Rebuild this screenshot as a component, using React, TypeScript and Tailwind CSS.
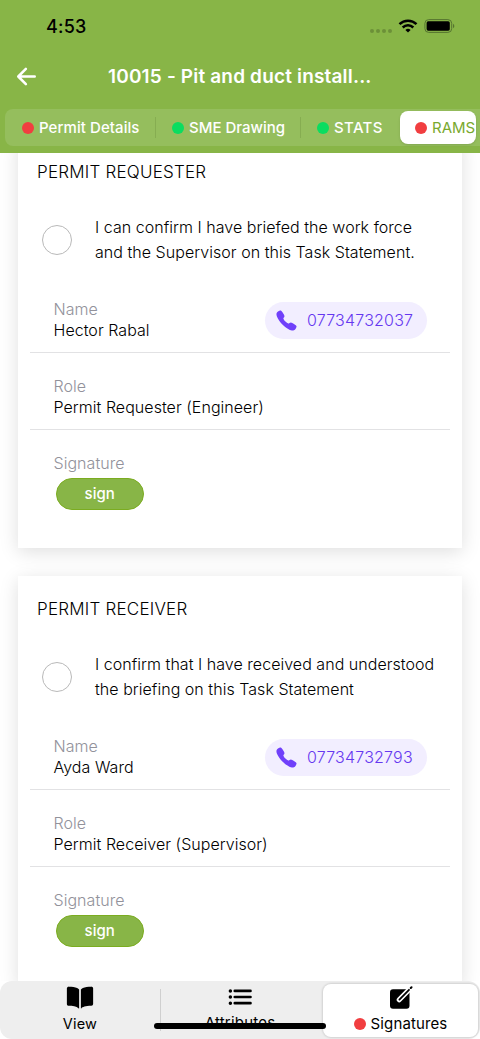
import React from 'react';
import { IoArrowBack, IoBook, IoCall, IoList } from 'react-icons/io5';

interface Person {
  title: string;
  statement: string[];
  name: string;
  phone: string;
  role: string;
}

const PEOPLE: Person[] = [
  {
    title: 'PERMIT REQUESTER',
    statement: ['I can confirm I have briefed the work force', 'and the Supervisor on this Task Statement.'],
    name: 'Hector Rabal',
    phone: '07734732037',
    role: 'Permit Requester (Engineer)',
  },
  {
    title: 'PERMIT RECEIVER',
    statement: ['I confirm that I have received and understood', 'the briefing on this Task Statement'],
    name: 'Ayda Ward',
    phone: '07734732793',
    role: 'Permit Receiver (Supervisor)',
  },
];

const StatusBar: React.FC = () => (
  <div className="flex h-[52px] items-center justify-between pl-[46px] pr-[25px] text-black">
    <span className="text-[18px] font-medium tracking-[0.2px]">4:53</span>
    <div className="flex items-center">
      <div className="mt-[9px] flex gap-[2px]">
        {[0, 1, 2, 3].map((dot) => (
          <span key={dot} className="h-1 w-1 rounded-full bg-[#6c9038]"></span>
        ))}
      </div>
      <svg className="ml-[6px]" width="20" height="14" viewBox="0 0 20 14" fill="none" stroke="black" strokeWidth="2.5">
        <path d="M1.5 5.1a12.2 12.2 0 0 1 17 0" />
        <path d="M4.7 8.5a7.6 7.6 0 0 1 10.6 0" />
        <path d="M10 13.6 7.4 11a3.8 3.8 0 0 1 5.2 0Z" fill="black" stroke="none" />
      </svg>
      <svg className="ml-[6px]" width="31" height="14" viewBox="0 0 31 14">
        <rect x="0.9" y="0.6" width="26.8" height="12.8" rx="3.8" fill="none" stroke="#557430" strokeWidth="1" />
        <rect x="2.6" y="2.3" width="23.2" height="9.4" rx="1.6" />
        <path d="M29 4.8c1.8.8 1.8 3.6 0 4.4Z" fill="#557430" />
      </svg>
    </div>
  </div>
);

const Dot: React.FC<{ color: string }> = ({ color }) => (
  <span className={`h-3 w-3 shrink-0 rounded-full ${color}`}></span>
);

const SignIcon: React.FC = () => (
  <svg width="24" height="24" viewBox="0 0 24 24" fill="none" strokeLinecap="round">
    <rect x="1" y="3.2" width="19.5" height="19.5" rx="3" fill="black" />
    <path d="M10.2 13.8 20.5 3.2" stroke="white" strokeWidth="5" />
    <path d="m10.4 13.6 9.6-9.8" stroke="black" strokeWidth="1.8" />
    <path d="m21.8 2 .7-.7" stroke="black" strokeWidth="2" />
  </svg>
);

const Header: React.FC = () => (
  <header className="relative z-10 h-[153px] overflow-hidden bg-[#88b547] text-white">
    <StatusBar />
    <div className="flex h-[49px] items-center pl-[13px]">
      <IoArrowBack size={27} />
      <h1 className="ml-[68px] mt-[2px] text-[19px] font-semibold tracking-[0.17px] whitespace-nowrap">10015 - Pit and duct install...</h1>
    </div>
    <nav className="ml-[5px] mt-2 flex h-[37px] items-center rounded-l-lg bg-[#95be5d] text-[15px] font-medium leading-[23px] whitespace-nowrap">
      <div className="flex w-[150px] items-center gap-[5px] pl-[17px] tracking-[0.07px]"><Dot color="bg-[#f13e40]" />Permit Details</div>
      <div className="h-[21px] w-px bg-[#86ad51]"></div>
      <div className="flex w-[144px] items-center gap-[5px] pl-4"><Dot color="bg-[#0bdd60]" />SME Drawing</div>
      <div className="h-[21px] w-px bg-[#86ad51]"></div>
      <div className="flex w-[99px] items-center gap-[5px] pl-4 tracking-[0.35px]"><Dot color="bg-[#0bdd60]" />STATS</div>
      <div className="flex h-[33px] w-[76px] items-center gap-[5px] overflow-hidden rounded-lg bg-white pl-[15px] font-normal text-[#79a92e] shadow-sm">
        <Dot color="bg-[#f13e40]" />RAMS
      </div>
    </nav>
  </header>
);

const SignatureCard: React.FC<{ person: Person }> = ({ person }) => (
  <section className="h-[409px] shrink-0 bg-white pt-5 font-light tracking-[0.04px] shadow-[0_4px_18px_rgba(0,0,0,0.13)]">
    <h2 className="h-[26px] pl-[19px] text-[17px] leading-[27px] tracking-[0.22px]">{person.title}</h2>
    <div className="mt-[30px] flex items-center pl-[23.5px]">
      <span className="mt-px h-[30.5px] w-[30.5px] rounded-full border border-[#b9b9b9]"></span>
      <p className="ml-[23px] text-[16px] leading-[24.5px] whitespace-nowrap">
        {person.statement[0]}<br />{person.statement[1]}
      </p>
    </div>
    <div className="ml-3 mr-[11.5px] mt-3">
      <div className="flex h-[77px] justify-between border-b border-[#e2e2e4] pl-[23.5px] pr-[23px] pt-[23px] text-[16px] leading-[21px]">
        <div>
          <div className="text-[#92929b]">Name</div>
          <div>{person.name}</div>
        </div>
        <div className="mt-[2.5px] flex h-[37px] w-[162px] items-center rounded-full bg-[#f2eeff] pl-[10px] text-[#6638f0]">
          <IoCall size={23} className="text-[#7040fa]" />
          <span className="ml-[9px] mt-px tracking-[0.2px]">{person.phone}</span>
        </div>
      </div>
      <div className="h-[77px] border-b border-[#e2e2e4] pl-[23.5px] pt-[23px] text-[16px] leading-[21px]">
        <div className="text-[#92929b]">Role</div>
        <div>{person.role}</div>
      </div>
      <div className="pl-[23.5px] pt-[23px] text-[16px] leading-[21px]">
        <div className="text-[#92929b]">Signature</div>
        <button className="ml-[2px] mt-[3.5px] block h-8 w-[88.5px] rounded-full border border-[#7bac20] bg-[#88b547] text-[15px] font-medium text-white">sign</button>
      </div>
    </div>
  </section>
);

const BottomTabs: React.FC = () => (
  <nav className="relative z-10 flex h-[58px] shrink-0 items-center rounded-xl bg-[#eeeeee] text-[15px] leading-5 tracking-[0.2px]">
    <div className="flex w-[160px] flex-col items-center">
      <IoBook size={28} className="-mt-[3px]" />
      <span className="mt-[2px] text-[14.5px]">View</span>
    </div>
    <div className="h-[42px] w-px bg-[#cfcfcf]"></div>
    <div className="flex w-[158px] flex-col items-center">
      <IoList size={28} className="-mt-[4px]" />
      <span className="mt-[2px]">Attributes</span>
    </div>
    <div className="ml-[4px] flex h-[53px] w-[155px] flex-col items-center rounded-lg bg-white pt-[2px] shadow-[0_0_2px_1px_rgba(0,0,0,0.12)]">
      <SignIcon />
      <span className="mt-[4px] flex items-center gap-[5px] tracking-[0.12px]"><Dot color="bg-[#f13e40]" />Signatures</span>
    </div>
    {/* home indicator sits over the tabs */}
    <div className="absolute bottom-[10px] left-[154px] h-[6px] w-[172px] rounded-full bg-black"></div>
  </nav>
);

export default function App() {
  return (
    <div className="flex h-[1039px] w-[480px] flex-col overflow-hidden bg-white font-['Inter','Liberation_Sans',sans-serif] text-black">
      <Header />
      <main className="flex min-h-0 flex-1 flex-col overflow-hidden">
        <div className="-mt-[14px] flex flex-col gap-7 pl-[18px] pr-[18.5px]">
          {PEOPLE.map((person) => (
            <SignatureCard key={person.title} person={person} />
          ))}
        </div>
      </main>
      <BottomTabs />
    </div>
  );
}
